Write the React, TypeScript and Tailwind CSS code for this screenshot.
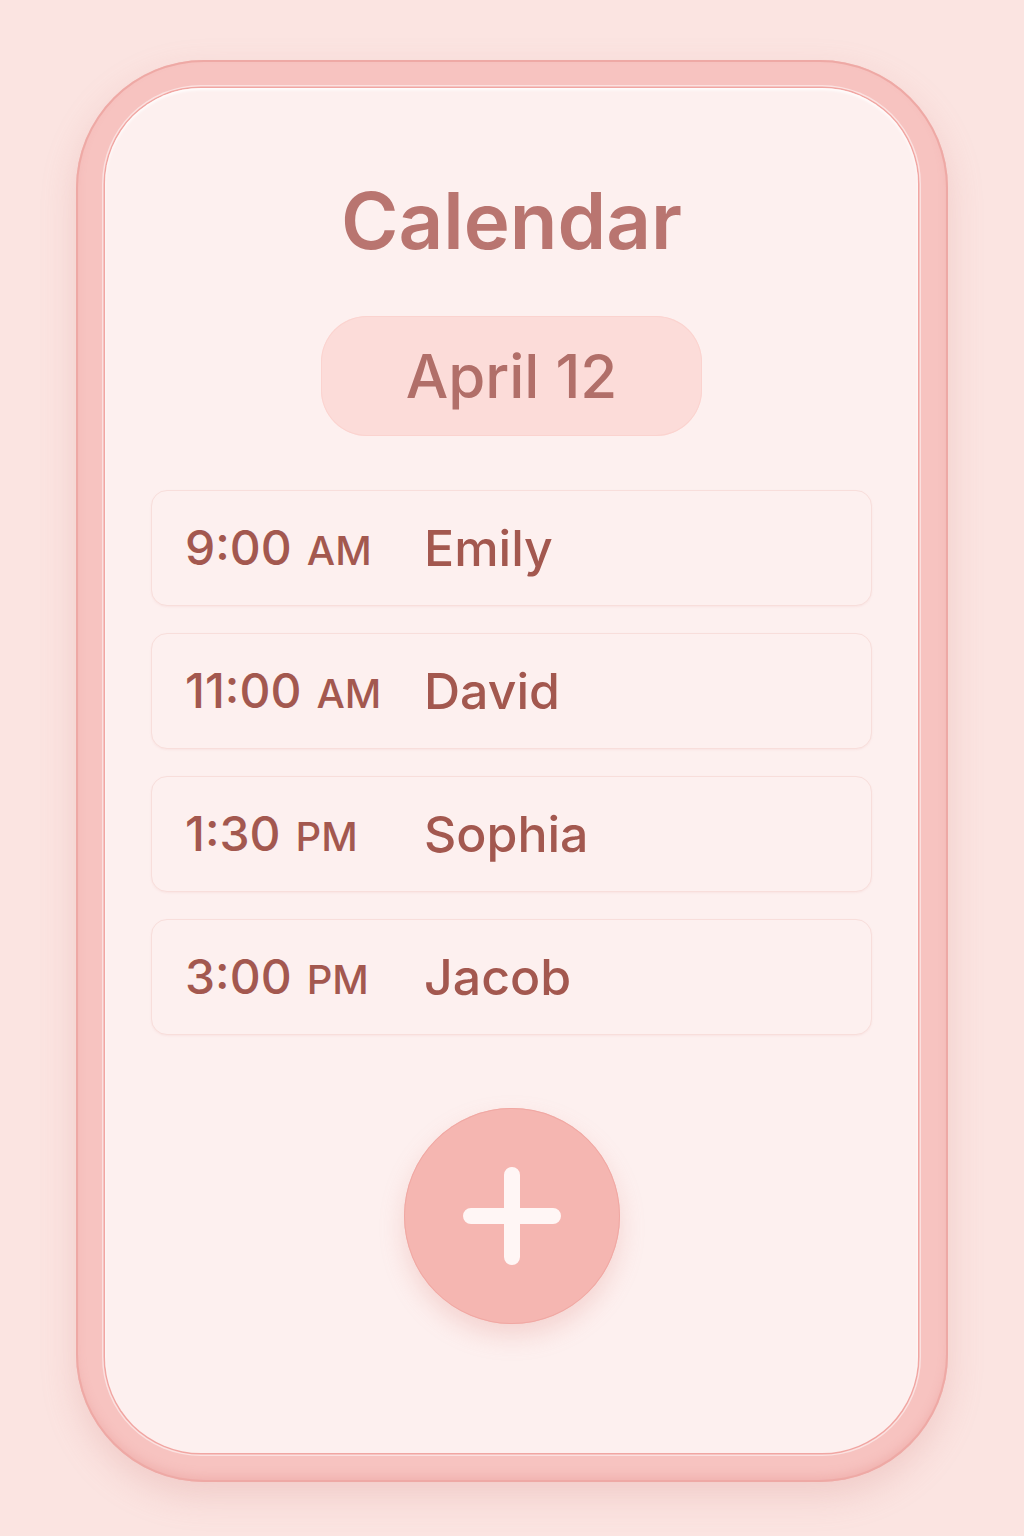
import React from 'react';

const appointments = [
  { time: '9:00', period: 'AM', name: 'Emily' },
  { time: '11:00', period: 'AM', name: 'David' },
  { time: '1:30', period: 'PM', name: 'Sophia' },
  { time: '3:00', period: 'PM', name: 'Jacob' },
];

export default function App() {
  return (
    <div
      className="w-[1024px] h-[1536px] bg-[#fbe4e1] pt-[60px] flex justify-center"
      style={{ fontFamily: 'Inter, "Noto Sans", sans-serif' }}
    >
      {/* phone frame */}
      <div className="w-[872px] h-[1422px] rounded-[128px] bg-[#f7c3c0] pt-[28px] pl-[29px] pr-[30px] pb-[29px] shadow-[0_14px_34px_rgba(214,140,136,0.28),inset_0_0_0_2px_#eea9a5,inset_0_-6px_10px_rgba(222,130,126,0.25)]">
        <div className="w-full h-full rounded-[96px] bg-[#fdf0ef] flex flex-col items-center pt-[94px] px-[46px] shadow-[0_0_0_1.5px_#f1a6a2,0_0_0_3px_rgba(255,255,255,0.5),inset_0_2px_3px_rgba(255,255,255,0.9)]">
          <h1 className="text-[78px] leading-none font-semibold text-[#b97570]">
            Calendar
          </h1>

          {/* date pill */}
          <div className="mt-[56px] w-[381px] h-[120px] rounded-[46px] bg-[#fcdcd9] flex items-center justify-center shadow-[inset_0_0_0_1px_#fbd3cf]">
            <span className="text-[60px] leading-none font-medium text-[#b16f69]">April 12</span>
          </div>

          {/* appointments */}
          <div className="mt-[54px] w-full flex flex-col gap-[27px]">
            {appointments.map((a) => (
              <div
                key={a.name}
                className="h-[116px] rounded-[16px] bg-[#fdf0ef] border border-[#f8dedb] shadow-[0_1px_2px_rgba(230,170,165,0.15)] flex items-center pl-[33px]"
              >
                <div className="w-[239px] flex items-baseline text-[#a3584f] font-medium">
                  <span className="text-[48px] leading-none">{a.time}</span>
                  <span className="ml-[15px] text-[40px] leading-none">{a.period}</span>
                </div>
                <span className="text-[50px] leading-none text-[#a3584f] font-medium">{a.name}</span>
              </div>
            ))}
          </div>

          {/* add button */}
          <button className="mt-[73px] w-[216px] h-[216px] rounded-full bg-[#f5b6b1] flex items-center justify-center shadow-[0_12px_24px_rgba(222,140,134,0.28),inset_0_0_0_1px_#f0a8a3]">
            <svg width="98" height="98" viewBox="0 0 98 98" fill="none">
              <path d="M49 8 V90 M8 49 H90" stroke="#fff6f5" strokeWidth="16" strokeLinecap="round" />
            </svg>
          </button>
        </div>
      </div>
    </div>
  );
}
